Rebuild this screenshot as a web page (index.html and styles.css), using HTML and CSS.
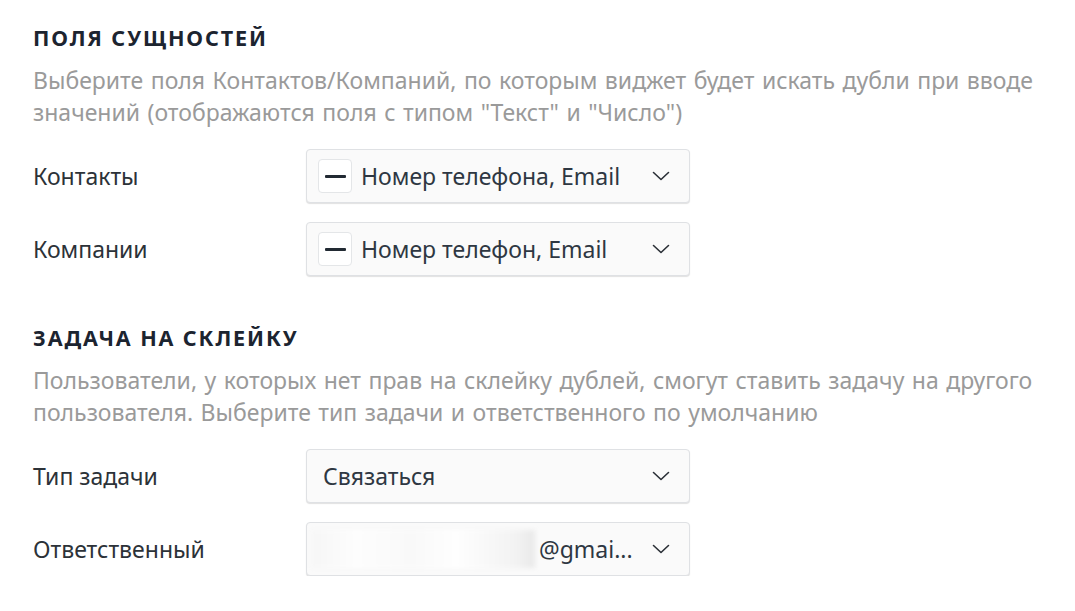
FILE: index.html
```html
<!DOCTYPE html>
<html lang="ru">
<head>
    <meta charset="UTF-8">
    <meta name="viewport" content="width=device-width, initial-scale=1.0">
    <title>Настройки виджета</title>
    <link rel="stylesheet" href="styles.css">
</head>
<body>
    <div class="settings">
        <section class="section">
            <h2 class="section-title">Поля сущностей</h2>
            <p class="section-desc">Выберите поля Контактов/Компаний, по которым виджет будет искать дубли при вводе значений (отображаются поля с типом "Текст" и "Число")</p>

            <div class="fields">
                <div class="field-row">
                    <div class="field-label">Контакты</div>
                    <div class="select">
                        <span class="select-check"><span class="dash"></span></span>
                        <span class="select-value">Номер телефона, Email</span>
                        <svg class="chevron" viewBox="0 0 18 10" width="18" height="10"><path d="M1.5 1.5 L9 8.5 L16.5 1.5" fill="none" stroke="#2a2f36" stroke-width="1.6" stroke-linecap="round" stroke-linejoin="round"/></svg>
                    </div>
                </div>
                <div class="field-row">
                    <div class="field-label">Компании</div>
                    <div class="select">
                        <span class="select-check"><span class="dash"></span></span>
                        <span class="select-value">Номер телефон, Email</span>
                        <svg class="chevron" viewBox="0 0 18 10" width="18" height="10"><path d="M1.5 1.5 L9 8.5 L16.5 1.5" fill="none" stroke="#2a2f36" stroke-width="1.6" stroke-linecap="round" stroke-linejoin="round"/></svg>
                    </div>
                </div>
            </div>
        </section>

        <section class="section">
            <h2 class="section-title">Задача на склейку</h2>
            <p class="section-desc">Пользователи, у которых нет прав на склейку дублей, смогут ставить задачу на другого пользователя. Выберите тип задачи и ответственного по умолчанию</p>

            <div class="fields">
                <div class="field-row">
                    <div class="field-label">Тип задачи</div>
                    <div class="select select-plain">
                        <span class="select-value">Связаться</span>
                        <svg class="chevron" viewBox="0 0 18 10" width="18" height="10"><path d="M1.5 1.5 L9 8.5 L16.5 1.5" fill="none" stroke="#2a2f36" stroke-width="1.6" stroke-linecap="round" stroke-linejoin="round"/></svg>
                    </div>
                </div>
                <div class="field-row">
                    <div class="field-label">Ответственный</div>
                    <div class="select select-user">
                        <span class="redacted"></span>
                        <span class="select-value">@gmai...</span>
                        <svg class="chevron" viewBox="0 0 18 10" width="18" height="10"><path d="M1.5 1.5 L9 8.5 L16.5 1.5" fill="none" stroke="#2a2f36" stroke-width="1.6" stroke-linecap="round" stroke-linejoin="round"/></svg>
                    </div>
                </div>
            </div>
        </section>
    </div>
</body>
</html>
```

FILE: styles.css
```css
body {
    margin: 0;
    padding: 25px 33px 0;
    background: #fff;
    font-family: 'Noto Sans', 'Open Sans', sans-serif;
    color: #2f353c;
}

.section + .section {
    margin-top: 49px;
}

.section-title {
    margin: 0;
    font-size: 21.5px;
    line-height: 26px;
    font-weight: 700;
    letter-spacing: 1.9px;
    text-transform: uppercase;
    color: #1c2430;
}

.section-desc {
    margin: 13px 0 0;
    font-size: 23px;
    line-height: 32px;
    word-spacing: 1.5px;
    color: #9a9a9a;
}

.fields {
    display: flex;
    flex-direction: column;
    gap: 19px;
    margin-top: 21px;
}

.field-row {
    display: flex;
    align-items: center;
}

.field-label {
    width: 273px;
    font-size: 23px;
    color: #2c3238;
}

.select {
    box-sizing: border-box;
    width: 384px;
    height: 54px;
    display: flex;
    align-items: center;
    gap: 9px;
    padding: 0 19px 0 11px;
    background: #fafafa;
    border: 1px solid #dfe1e4;
    border-radius: 4px;
    box-shadow: 0 1px 1px rgba(0, 0, 0, 0.12);
}

.select-plain {
    padding-left: 16px;
}

.select-user {
    gap: 4px;
    padding-left: 4px;
}

.select-check {
    box-sizing: border-box;
    width: 34px;
    height: 34px;
    display: flex;
    align-items: center;
    justify-content: center;
    background: #fff;
    border: 1px solid #e4e6e8;
    border-radius: 4px;
}

.dash {
    width: 21px;
    height: 3px;
    background: #222a33;
    border-radius: 1px;
}

.select-value {
    flex: 1;
    font-size: 23px;
    color: #2e3742;
    white-space: nowrap;
}

.select-user .select-value {
    flex: none;
    margin-right: auto;
}

.redacted {
    width: 224px;
    height: 38px;
    background: linear-gradient(90deg, #f6f6f6 0%, #fdfdfd 20%, #f9f9f9 45%, #fefefe 65%, #f2f2f2 92%, #e9e9e9 100%);
    filter: blur(2px);
}

.chevron {
    flex: none;
}
```
